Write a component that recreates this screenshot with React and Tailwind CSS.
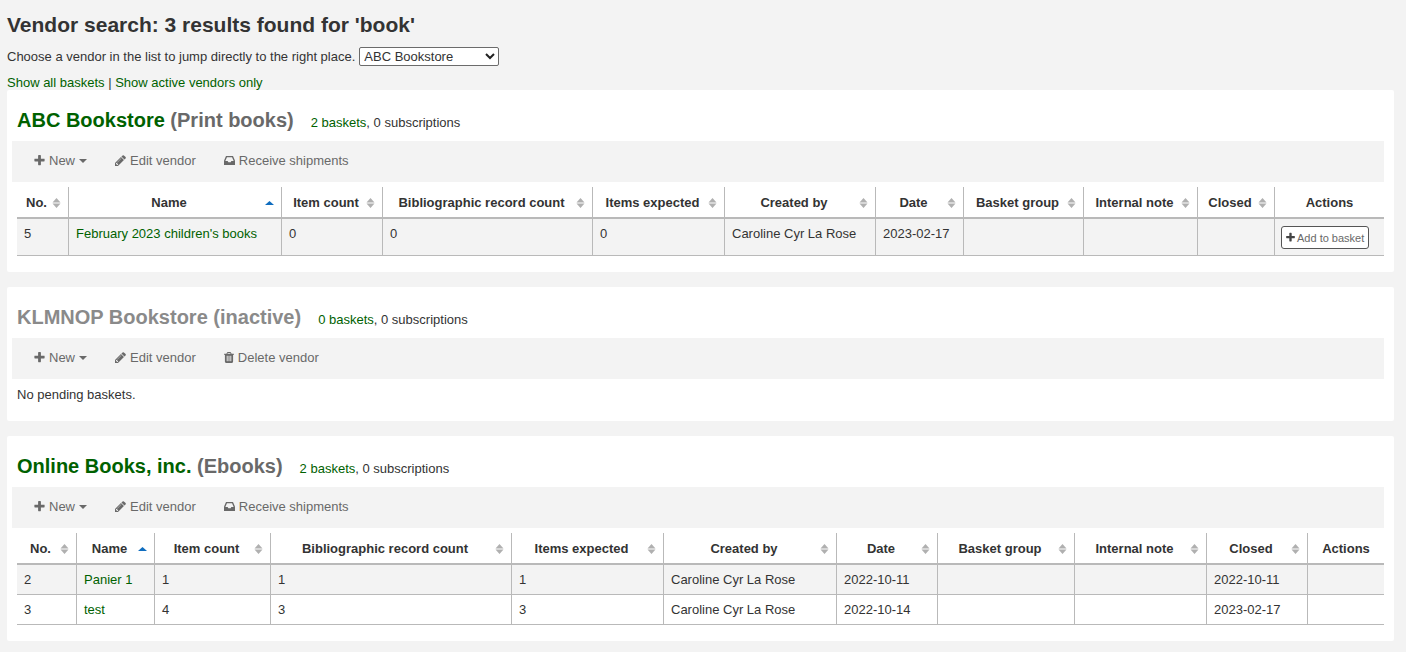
import React, { useState } from "react";

const Icon = ({ name, className = "" }) => {
  const icons = {
    plus: {
      box: "192 0 1408 1792",
      path: "M1600 736v192q0 40-28 68t-68 28h-416v416q0 40-28 68t-68 28h-192q-40 0-68-28t-28-68v-416h-416q-40 0-68-28t-28-68v-192q0-40 28-68t68-28h416v-416q0-40 28-68t68-28h192q40 0 68 28t28 68v416h416q40 0 68 28t28 68z",
    },
    pencil: {
      box: "128 0 1536 1792",
      path: "M491 1536l91-91-235-235-91 91v107h128v128h107zm523-928q0-22-22-22-10 0-17 7l-542 542q-7 7-7 17 0 22 22 22 10 0 17-7l542-542q7-7 7-17zm-54-192l416 416-832 832h-416v-416zm683 96q0 53-37 90l-166 166-416-416 166-165q36-38 90-38 53 0 91 38l235 234q37 39 37 91z",
    },
    inbox: {
      box: "128 0 1536 1792",
      path: "M1151 960h316q-1-3-2.5-8.5t-2.5-7.5l-212-496h-708l-212 496q-1 3-2.5 8.5t-2.5 7.5h316l95 192h320zm513 30v482q0 26-19 45t-45 19h-1408q-26 0-45-19t-19-45v-482q0-62 25-123l238-552q10-25 36.5-42t52.5-17h832q26 0 52.5 17t36.5 42l238 552q25 61 25 123z",
    },
    trash: {
      box: "192 0 1408 1792",
      path: "M704 1376v-704q0-14-9-23t-23-9h-64q-14 0-23 9t-9 23v704q0 14 9 23t23 9h64q14 0 23-9t9-23zm256 0v-704q0-14-9-23t-23-9h-64q-14 0-23 9t-9 23v704q0 14 9 23t23 9h64q14 0 23-9t9-23zm256 0v-704q0-14-9-23t-23-9h-64q-14 0-23 9t-9 23v704q0 14 9 23t23 9h64q14 0 23-9t9-23zm-544-992h448l-48-117q-7-9-17-11h-317q-10 2-17 11zm928 32v64q0 14-9 23t-23 9h-96v948q0 83-47 143.5t-113 60.5h-832q-66 0-113-58.5t-47-141.5v-952h-96q-14 0-23-9t-9-23v-64q0-14 9-23t23-9h309l70-167q15-37 54-63t79-26h320q40 0 79 26t54 63l70 167h309q14 0 23 9t9 23z",
    },
  };

  return (
    <svg
      viewBox={icons[name].box}
      fill="currentColor"
      aria-hidden="true"
      className={`shrink-0 ${className}`}
    >
      <path d={icons[name].path} />
    </svg>
  );
};

const vendors = [
  {
    id: 1,
    name: "ABC Bookstore",
    note: "(Print books)",
    active: true,
    baskets: 2,
    cols: [
      "w-[52px]",
      "w-[213px]",
      "w-[101px]",
      "w-[210px]",
      "w-[132px]",
      "w-[151px]",
      "w-[88px]",
      "w-[120px]",
      "w-[114px]",
      "w-[77px]",
      "w-[109px]",
    ],
    rows: [
      {
        no: 5,
        name: "February 2023 children's books",
        items: 0,
        biblios: 0,
        expected: 0,
        by: "Caroline Cyr La Rose",
        date: "2023-02-17",
        closed: "",
      },
    ],
  },
  {
    id: 2,
    name: "KLMNOP Bookstore",
    note: "(inactive)",
    active: false,
    baskets: 0,
    rows: [],
  },
  {
    id: 3,
    name: "Online Books, inc.",
    note: "(Ebooks)",
    active: true,
    baskets: 2,
    cols: [
      "w-[60px]",
      "w-[78px]",
      "w-[116px]",
      "w-[241px]",
      "w-[152px]",
      "w-[173px]",
      "w-[101px]",
      "w-[137px]",
      "w-[132px]",
      "w-[101px]",
      "w-[76px]",
    ],
    rows: [
      {
        no: 2,
        name: "Panier 1",
        items: 1,
        biblios: 1,
        expected: 1,
        by: "Caroline Cyr La Rose",
        date: "2022-10-11",
        closed: "2022-10-11",
      },
      {
        no: 3,
        name: "test",
        items: 4,
        biblios: 3,
        expected: 3,
        by: "Caroline Cyr La Rose",
        date: "2022-10-14",
        closed: "2023-02-17",
      },
    ],
  },
];

const headers = [
  "No.",
  "Name",
  "Item count",
  "Bibliographic record count",
  "Items expected",
  "Created by",
  "Date",
  "Basket group",
  "Internal note",
  "Closed",
];

const App = () => {
  const [vendor, setVendor] = useState("ABC Bookstore");

  return (
    <div className="min-h-screen bg-[#f3f3f3] pl-[7px] pr-3 pb-[11px] font-['Liberation_Sans',Arial,sans-serif] text-[13px] leading-5 text-[#333]">
      <h1 className="pt-[13px] text-[21px] leading-6 font-bold">
        Vendor search: 3 results found for 'book'
      </h1>

      <div className="mt-[10px] flex items-start gap-1">
        <label htmlFor="vendor">
          Choose a vendor in the list to jump directly to the right place.
        </label>
        <div className="relative flex">
          <select
            id="vendor"
            value={vendor}
            onChange={(e) => setVendor(e.target.value)}
            className="h-[19px] w-[140px] appearance-none rounded-[2px] border border-[#6b6b6b] bg-white pt-px pl-1 leading-4"
          >
            {vendors.map((v) => (
              <option key={v.id}>{v.name}</option>
            ))}
          </select>
          <svg
            viewBox="0 0 10 7"
            fill="none"
            stroke="#222"
            strokeWidth="2"
            aria-hidden="true"
            className="pointer-events-none absolute top-[6px] right-1 h-[7px] w-[10px]"
          >
            <path d="M1 1l4 4 4-4" />
          </svg>
        </div>
      </div>

      <p className="mt-[6px] mb-[-3px]">
        <GreenLink>Show all baskets</GreenLink> |{" "}
        <GreenLink>Show active vendors only</GreenLink>
      </p>

      <div className="flex flex-col gap-[15px]">
        {vendors.map((v) => (
          <Vendor key={v.id} vendor={v} />
        ))}
      </div>
    </div>
  );
};

const GreenLink = ({ children }) => (
  <a href="#" className="text-[#006100] hover:underline">
    {children}
  </a>
);

const Vendor = ({ vendor }) => (
  <section className="rounded-[2px] bg-white px-[10px] pb-4">
    <div className="flex items-baseline gap-[17px] pt-[18px] pb-2">
      <h2 className="text-[20px] leading-6 font-bold text-[#696969]">
        {vendor.active ? (
          <>
            <GreenLink>{vendor.name}</GreenLink> {vendor.note}
          </>
        ) : (
          <a href="#" className="text-[#8a8a8a]">
            {vendor.name} {vendor.note}
          </a>
        )}
      </h2>
      <span>
        <GreenLink>{vendor.baskets} baskets</GreenLink>, 0 subscriptions
      </span>
    </div>

    {/* Toolbar */}
    <div className="-ml-[5px] flex h-[41px] items-center gap-[28px] bg-[#f3f3f3] pb-[2px] pl-[22px] text-[#696969]">
      <button type="button" className="flex items-center gap-1">
        <Icon name="plus" className="h-[13px] w-[11px]" />
        New
        <svg
          viewBox="0 0 8 4"
          fill="currentColor"
          aria-hidden="true"
          className="mt-px h-1 w-2"
        >
          <path d="M0 0h8L4 4z" />
        </svg>
      </button>
      <a href="#" className="flex items-center gap-1">
        <Icon name="pencil" className="h-[13px] w-[11px]" />
        Edit vendor
      </a>
      {vendor.active ? (
        <a href="#" className="flex items-center gap-1">
          <Icon name="inbox" className="h-[13px] w-[11px]" />
          Receive shipments
        </a>
      ) : (
        <button type="button" className="flex items-center gap-1">
          <Icon name="trash" className="h-[13px] w-[10px]" />
          Delete vendor
        </button>
      )}
    </div>

    {vendor.rows.length > 0 ? (
      <BasketTable vendor={vendor} />
    ) : (
      <p className="pt-[6px]">No pending baskets.</p>
    )}
  </section>
);

const SortIcon = ({ sorted }) =>
  sorted ? (
    <svg viewBox="0 0 9 10" aria-hidden="true" className="h-[10px] w-[9px]">
      <path d="M0 7L4.5 3 9 7z" fill="#0f6dbf" />
    </svg>
  ) : (
    <svg
      viewBox="0 0 9 10"
      fill="#b0b0b0"
      aria-hidden="true"
      className="h-[10px] w-[9px]"
    >
      <path d="M0.5 4.4L4.5 0l4 4.4zM0.5 5.6L4.5 10l4-4.4z" />
    </svg>
  );

const BasketTable = ({ vendor }) => (
  <table className="mt-[5px] w-full table-fixed border-separate border-spacing-0">
    <colgroup>
      {vendor.cols.map((width, i) => (
        <col key={i} className={width} />
      ))}
    </colgroup>
    <thead>
      <tr className="h-8">
        {headers.map((header) => (
          <th
            key={header}
            className="border-r border-b-2 border-[#b9b9b9] p-0 pt-[2px] font-bold whitespace-nowrap"
          >
            <div className="flex items-center pr-[7px] pl-1">
              <span className="flex-1">{header}</span>
              <SortIcon sorted={header === "Name"} />
            </div>
          </th>
        ))}
        <th className="border-b-2 border-[#b9b9b9] p-0 pt-[2px] font-bold">
          Actions
        </th>
      </tr>
    </thead>
    <tbody>
      {vendor.rows.map((row) => (
        <tr key={row.no} className="odd:bg-[#f3f3f3]">
          <Cell>{row.no}</Cell>
          <Cell>
            <GreenLink>{row.name}</GreenLink>
          </Cell>
          <Cell>{row.items}</Cell>
          <Cell>{row.biblios}</Cell>
          <Cell>{row.expected}</Cell>
          <Cell>{row.by}</Cell>
          <Cell>{row.date}</Cell>
          <Cell />
          <Cell />
          <Cell>{row.closed}</Cell>
          <td className="border-b border-[#b9b9b9] px-[6px] pt-[7px] pb-[6px] align-top">
            {!row.closed && (
              <button
                type="button"
                className="flex h-[23px] items-center gap-[2px] rounded-[3px] border border-[#555] bg-white px-1 text-[11px] text-[#696969]"
              >
                <Icon name="plus" className="h-[11px] w-[9px] text-[#444]" />
                Add to basket
              </button>
            )}
          </td>
        </tr>
      ))}
    </tbody>
  </table>
);

const Cell = ({ children }) => (
  <td className="border-r border-b border-[#b9b9b9] px-[7px] pt-[5px] pb-1 align-top whitespace-nowrap">
    {children}
  </td>
);

export default App;
